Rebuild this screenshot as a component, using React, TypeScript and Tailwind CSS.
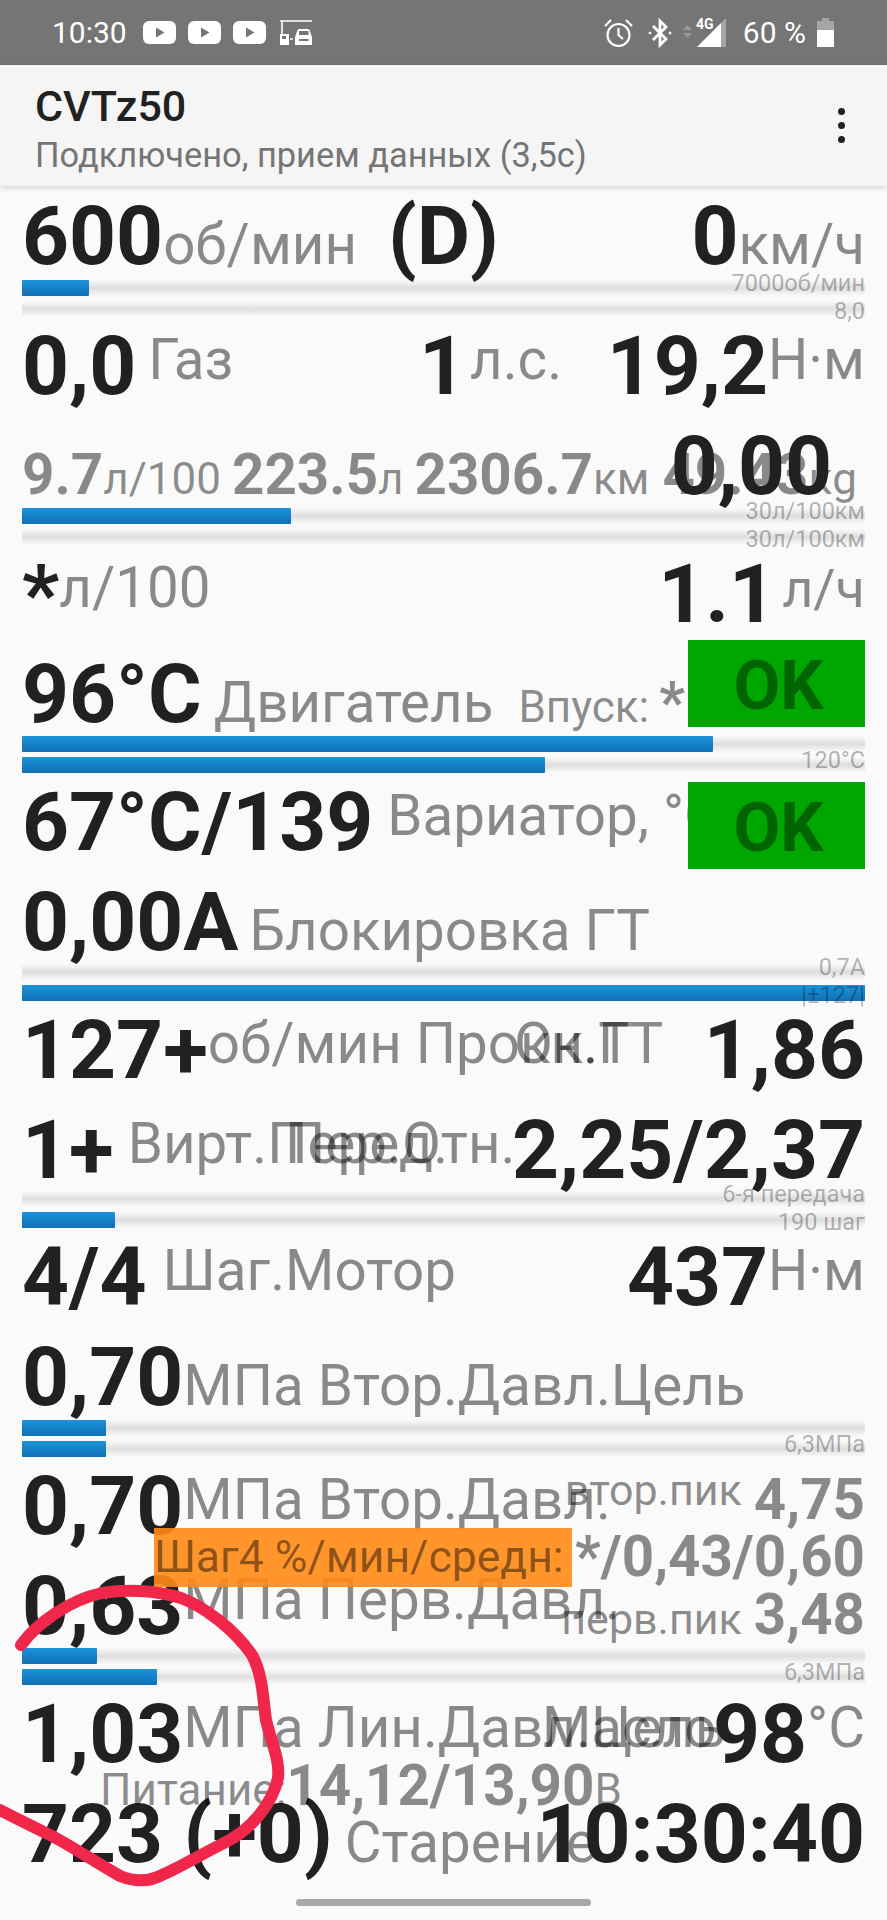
import type { ReactNode } from 'react';
import clsx from 'clsx';

const Num = ({ children }: { children: ReactNode }) => (
  <span className="font-bold text-[82px] text-[#212121]">{children}</span>
);

// grey unit next to a value, raised = sits 15px above the value's baseline
const Unit = ({ children, raised, size, className }: { children: ReactNode; raised?: boolean; size?: string; className?: string }) => (
  <span className={clsx(size ?? 'text-[56.500px]', 'text-black/45', raised && 'align-[15px]', className)}>{children}</span>
);

const Stat = ({ children, className }: { children: ReactNode; className?: string }) => (
  <span className={clsx('font-bold text-[56.500px] text-black/45', className)}>{children}</span>
);

const Row = ({ h, children }: { h: string; children: ReactNode }) => (
  <div className={clsx('relative flex justify-between whitespace-nowrap text-[82px] leading-none', h)}>{children}</div>
);

interface BarProps {
  width: number;
  label?: string;
  low?: boolean;
}

const Bar = ({ width, label, low }: BarProps) => (
  <div className="relative h-4">
    <div className="absolute inset-0 bg-linear-to-b from-transparent via-[#dedede] to-transparent" />
    {width > 0 && (
      <div
        className="relative h-4 rounded-[1px] bg-linear-to-b from-[#1c92dc] to-[#0f70b2]"
        style={{ width }}
      />
    )}
    {label && (
      <span className={clsx('absolute right-0 text-[23.5px] leading-none text-black/30', low ? 'top-[-1px]' : 'top-[-8px]')}>
        {label}
      </span>
    )}
  </div>
);

const Bars = ({ a, b }: { a: BarProps; b: BarProps }) => (
  <div className="mb-2 flex flex-col gap-[5px]">
    <Bar {...a} />
    <Bar {...b} />
  </div>
);

const OkBox = ({ className }: { className: string }) => (
  <div className={clsx('absolute right-0 flex h-[87px] w-[177px] items-center justify-center bg-[#00a600] pl-[4px] pt-[5px] text-[68px] font-bold leading-none text-[#006500]', className)}>
    OK
  </div>
);

const YouTube = () => (
  <svg width="33" height="23" viewBox="0 0 33 23">
    <rect width="33" height="23" rx="6" fill="#fff" />
    <path d="M13 6.500 L21.500 11.500 L13 16.500 Z" fill="#757575" />
  </svg>
);

const StatusBar = () => (
  <div className="flex h-[65px] items-center justify-between bg-[#757575] pl-[52px] pr-[53px] text-white">
    <div className="flex items-center">
      <span className="mr-[16px] text-[30px]">10:30</span>
      <div className="flex items-center gap-[12px]">
        <YouTube />
        <YouTube />
        <YouTube />
        <svg width="34" height="27" viewBox="0 0 34 27" fill="none" className="ml-[1px]">
          <path d="M1 2 H33 M3 2 V16" stroke="#fff" strokeWidth="1.600" />
          <path d="M1 15 H10 V26 H1 Z" fill="#fff" />
          <rect x="3" y="17" width="4" height="3" fill="#757575" />
          <path d="M11 20 H14" stroke="#fff" strokeWidth="1.500" />
          <path d="M16 18 L18.500 11 Q19 10 21 10 H28 Q30 10 30.500 11 L33 18 V26 H16 Z" fill="#fff" />
          <rect x="20" y="12" width="9.500" height="4" fill="#757575" />
          <rect x="20" y="20" width="9.500" height="2" fill="#757575" />
        </svg>
      </div>
    </div>
    <div className="flex items-center">
      <svg width="31" height="30" viewBox="0 0 31 30" fill="none" stroke="#fff" strokeWidth="2.200" className="mr-[14px]">
        <circle cx="15.500" cy="17" r="11" />
        <path d="M15.500 10 V17 L20 21" />
        <path d="M2 8 L8 2 M29 8 L23 2" />
      </svg>
      <svg width="24" height="30" viewBox="0 0 24 30" fill="none" stroke="#fff" strokeWidth="2.800" className="mr-[11px]">
        <path d="M5 8 L18 21 L12 27 V3 L18 9 L5 22" />
        <circle cx="2" cy="15" r="1" fill="#fff" strokeWidth="1" />
        <circle cx="22" cy="15" r="1" fill="#fff" strokeWidth="1" />
      </svg>
      <svg width="43" height="31" viewBox="0 0 43 31" className="mr-[17px]">
        <path d="M0 13 L4.500 8 L9 13 Z M0 16 L9 16 L4.500 21 Z" fill="#999" />
        <path d="M43 1 V30 H38 V6 Z" fill="#a5a5a5" />
        <path d="M38 6 V30 H14 Z" fill="#fff" />
        <text x="13" y="12" fontFamily="Roboto, sans-serif" fontWeight="700" fontSize="14" fill="#fff">4G</text>
      </svg>
      <span className="mr-[11px] text-[30px]">60 %</span>
      <svg width="17" height="29" viewBox="0 0 17 29">
        <path d="M5 0 H12 V3 H17 V29 H0 V3 H5 Z" fill="#a5a5a5" />
        <path d="M0 12 H17 V29 H0 Z" fill="#fff" />
      </svg>
    </div>
  </div>
);

const AppBar = () => (
  <div className="relative flex h-[121px] items-center justify-between bg-[#f5f5f5] pl-[35px] pr-[42px] shadow-[0_2px_6px_rgba(0,0,0,0.16)]">
    <div className="pt-[4px]">
      <p className="text-[43px] font-medium leading-[48px] text-[#212121]">CVTz50</p>
      <p className="mt-[6px] text-[34.4px] leading-[38px] text-[#757575]">Подключено, прием данных (3,5с)</p>
    </div>
    <div className="flex flex-col gap-[7px]">
      <div className="size-[7px] rounded-full bg-[#212121]" />
      <div className="size-[7px] rounded-full bg-[#212121]" />
      <div className="size-[7px] rounded-full bg-[#212121]" />
    </div>
  </div>
);

export default function App() {
  return (
    <div className="relative h-[1920px] overflow-hidden bg-[#fafafa] font-['Roboto',sans-serif]">
      <StatusBar />
      <AppBar />
      <main className="px-[22px] pt-[9px]">
        <Row h="h-[85px]">
          <p>
            <Num>600</Num>
            <Unit>об/мин</Unit>
            <span className="ml-[31px] font-bold text-[#212121]">(D)</span>
          </p>
          <p className="absolute right-0">
            <Num>0</Num>
            <Unit>км/ч</Unit>
          </p>
        </Row>
        <Bars a={{ width: 67, label: '7000об/мин' }} b={{ width: 0, label: '8,0', low: true }} />

        <Row h="h-[100px]">
          <p>
            <Num>0,0</Num>
            <Unit raised className="ml-[12px]">Газ</Unit>
          </p>
          <p className="absolute left-[397px]">
            <Num>1</Num>
            <Unit raised className="ml-[4px]">л.с.</Unit>
          </p>
          <p>
            <Num>19,2</Num>
            <Unit raised>Н·м</Unit>
          </p>
        </Row>

        <Row h="h-[83px]">
          <p>
            <Stat>9.7</Stat>
            <Unit size="text-[44px]">л/100</Unit>
            <Stat className="ml-[11px]">223.5</Stat>
            <Unit size="text-[44px]">л</Unit>
            <Stat className="ml-[11px]">2306.7</Stat>
            <Unit size="text-[44px]">км</Unit>
            <Stat className="ml-[13px]">49.43</Stat>
            <Unit size="text-[44px]">кg</Unit>
          </p>
          <p className="absolute right-[33px] top-0">
            <Num>0,00</Num>
          </p>
        </Row>
        <Bars a={{ width: 269, label: '30л/100км' }} b={{ width: 0, label: '30л/100км', low: true }} />

        <Row h="h-[100px]">
          <p>
            <Num>*</Num>
            <Unit raised>л/100</Unit>
          </p>
          <p className="absolute right-0">
            <Num>1.1</Num>
            <Unit raised size="text-[54px]" className="ml-[6px]">л/ч</Unit>
          </p>
        </Row>

        <Row h="h-[83px]">
          <p>
            <Num>96°C</Num>
            <Unit className="ml-[12px]">Двигатель</Unit>
            <Unit size="text-[44px]" className="ml-[25px]">Впуск:</Unit>
            <Stat className="ml-[10px]">*</Stat>
          </p>
          <OkBox className="top-[-13px]" />
        </Row>
        <Bars a={{ width: 691 }} b={{ width: 523, label: '120°C' }} />

        <Row h="h-[100px]">
          <p>
            <Num>67°C/139</Num>
            <Unit raised className="ml-[14px]">Вариатор, °C</Unit>
          </p>
          <OkBox className="top-[1px]" />
        </Row>

        <Row h="h-[83px]">
          <p>
            <Num>0,00A</Num>
            <Unit className="ml-[11px]">Блокировка ГТ</Unit>
          </p>
        </Row>
        <Bars a={{ width: 0, label: '0,7A' }} b={{ width: 843, label: '|±127|', low: true }} />

        <Row h="h-[100px]">
          <p>
            <Num>127+</Num>
            <Unit raised>об/мин Прокн.ГТ</Unit>
          </p>
          <p className="absolute left-[492px]">
            <Unit raised>Ок.Т</Unit>
          </p>
          <p className="absolute right-0">
            <Num>1,86</Num>
          </p>
        </Row>

        <Row h="h-[82px]">
          <p>
            <Num>1+</Num>
            <Unit raised className="ml-[14px]">Вирт.Перед.</Unit>
          </p>
          <p className="absolute left-[263px]">
            <Unit raised>Пер.Отн.</Unit>
          </p>
          <p className="absolute right-0">
            <Num>2,25/2,37</Num>
          </p>
        </Row>
        <Bars a={{ width: 0, label: '6-я передача' }} b={{ width: 93, label: '190 шаг', low: true }} />

        <Row h="h-[100px]">
          <p>
            <Num>4/4</Num>
            <Unit raised className="ml-[16px]">Шаг.Мотор</Unit>
          </p>
          <p>
            <Num>437</Num>
            <Unit raised>Н·м</Unit>
          </p>
        </Row>

        <Row h="h-[84px]">
          <p>
            <Num>0,70</Num>
            <Unit>МПа Втор.Давл.Цель</Unit>
          </p>
        </Row>
        <Bars a={{ width: 84 }} b={{ width: 84, label: '6,3МПа' }} />

        <Row h="h-[100px]">
          <p>
            <Num>0,70</Num>
            <Unit raised>МПа Втор.Давл.</Unit>
          </p>
          <p className="absolute right-0">
            <Unit size="text-[43px]" className="align-[29px]">втор.пик</Unit>
            <Stat className="ml-[12px] align-[15px]">4,75</Stat>
          </p>
        </Row>

        <Row h="h-[83px]">
          <p>
            <Num>0,63</Num>
            <Unit raised>МПа Перв.Давл.</Unit>
          </p>
          <p className="absolute right-0">
            <Unit size="text-[43px]">перв.пик</Unit>
            <Stat className="ml-[12px]">3,48</Stat>
          </p>
          {/* overlay sits over the two pressure rows */}
          <div className="absolute left-[132px] top-[-37px] flex h-[59px] w-[418px] items-center bg-[#ff8a14]/90">
            <span className="text-[44.500px] leading-none text-black/45">Шаг4 %/мин/средн:</span>
          </div>
          <p className="absolute right-0 top-[-58px]">
            <Stat>*/0,43/0,60</Stat>
          </p>
        </Row>
        <Bars a={{ width: 75 }} b={{ width: 135, label: '6,3МПа' }} />

        <Row h="h-[100px]">
          <p>
            <Num>1,03</Num>
            <Unit raised>МПа Лин.Давл.Цель</Unit>
          </p>
          <p className="absolute left-[520px]">
            <Unit raised>Масло</Unit>
          </p>
          <p className="absolute right-0">
            <Num>98</Num>
            <Unit raised>°C</Unit>
          </p>
        </Row>

        <Row h="h-[100px]">
          <p>
            <Num>723 (+0)</Num>
            <Unit className="ml-[12px]">Старение</Unit>
          </p>
          <p className="absolute left-[78px] top-[-57px]">
            <Unit size="text-[44px]">Питание:</Unit>
            <Stat>14,12/13,90</Stat>
            <Unit size="text-[44px]">В</Unit>
          </p>
          <p className="absolute right-0">
            <Num>10:30:40</Num>
          </p>
        </Row>
      </main>

      {/* hand-drawn marker ring from the screenshot */}
      <svg className="absolute inset-0" width="887" height="1920" fill="none">
        <path
          d="M21 1645 C38 1622 70 1600 102 1593 C125 1589 155 1590 181 1598 C205 1607 235 1630 252 1655 C263 1675 263 1700 266 1720 C272 1745 280 1760 278 1778 C272 1805 250 1830 226 1842 C200 1855 180 1867 164 1874 C150 1882 135 1882 120 1876 C95 1862 70 1845 50 1835 C30 1825 15 1818 0 1810"
          stroke="#f0264a"
          strokeWidth="12"
          strokeLinecap="round"
        />
      </svg>

      <div className="absolute bottom-[14px] left-[296px] h-[7px] w-[295px] rounded-full bg-[#a8a8a8]" />
    </div>
  );
}
